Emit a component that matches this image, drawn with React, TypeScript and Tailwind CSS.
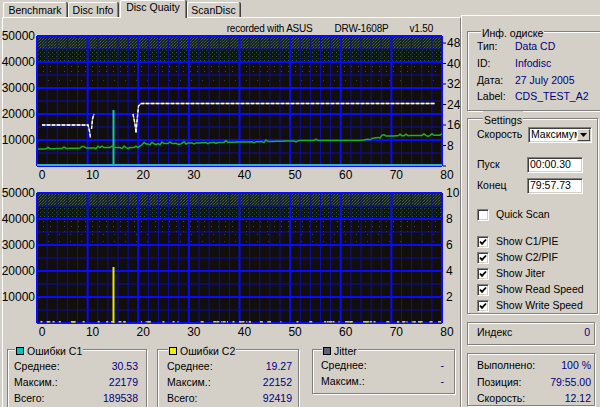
import React, { ReactNode } from "react";

const X0 = 37;
const X1 = 442;
const xs = (v: number) => X0 + (v * (X1 - X0)) / 80;
const rnd = (i: number) => {
  const s = Math.sin(i * 12.9898) * 43758.5453;
  return s - Math.floor(s);
};

const greenPts = (() => {
  const pts: string[] = [];
  for (let x = 38; x <= 442; x += 2) {
    let y;
    if (x < 100) y = 149 - (x - 37) * 0.02;
    else if (x < 138) y = 147.6;
    else if (x < 143) y = 147.6 - (x - 138) * 0.7;
    else if (x < 300) y = 144 - (x - 143) * 0.02;
    else if (x < 360) y = 140.6;
    else if (x < 385) y = 140.6 - (x - 360) * 0.18;
    else y = 136 - (x - 385) * 0.015;
    const n = rnd(x);
    y += n < 0.15 ? -1.5 : n > 0.9 ? 1 : 0;
    pts.push(`${x},${y.toFixed(1)}`);
  }
  return pts.join(" ");
})();

const whitePath =
  "M42,125 H88 L89.5,131 L90.5,138 M91.5,129 L92.5,119 L94,114 M133,114 L135,124 L136,133 L137,121 L138.5,106 L141,103.5 H435";

const yellowBits = Array.from({ length: 70 }, (_, i) => ({
  x: 40 + rnd(i + 100) * 400,
  w: 1 + Math.round(rnd(i + 300) * 2),
}));

const Chart = ({ top, kind }: { top: number; kind: "top" | "bottom" }) => {
  const id = kind;
  const y0 = top;
  const y1 = top + 130;
  const vLines = Array.from({ length: 41 }, (_, i) => i);
  const hLines = Array.from({ length: 11 }, (_, j) => j);

  return (
    <svg width={457} height={kind === "top" ? 146 : 147} className={`block overflow-visible ${kind === "bottom" ? "mt-[11px]" : ""}`}>
      <defs>
        <pattern id={`${id}-p1`} width="3" height="3" patternUnits="userSpaceOnUse">
          <rect width="3" height="3" fill="#17231b" />
          <rect x="0" y="0" width="1" height="1" fill="#3b5e4a" />
          <rect x="2" y="1" width="1" height="1" fill="#2d4a3a" />
          <rect x="1" y="2" width="1" height="1" fill="#406650" />
        </pattern>
        <pattern id={`${id}-p2`} width="4" height="4" patternUnits="userSpaceOnUse">
          <rect width="4" height="4" fill="#14140f" />
          <rect x="0" y="0" width="1" height="1" fill="#355c44" />
          <rect x="2" y="2" width="1" height="1" fill="#26422f" />
        </pattern>
        <pattern id={`${id}-p3`} width="7" height="5" patternUnits="userSpaceOnUse">
          <rect width="7" height="5" fill="#120e0a" />
          <rect x="1" y="1" width="1" height="1" fill="#325640" />
        </pattern>
        <pattern id={`${id}-p4`} width="11" height="7" patternUnits="userSpaceOnUse">
          <rect width="11" height="7" fill="#120e0a" />
          <rect x="4" y="3" width="1" height="1" fill="#2a4835" />
        </pattern>
      </defs>
      <g transform={`translate(-3,${-top})`} fontFamily='"Liberation Sans", Arial, sans-serif' fontSize="12">
        <rect x={X0} y={y0} width={X1 - X0} height={130} fill="#120e0a" />
        <rect x={X0} y={y0} width={X1 - X0} height={13} fill={`url(#${id}-p1)`} />
        <rect x={X0} y={y0 + 13} width={X1 - X0} height={13} fill={`url(#${id}-p2)`} />
        <rect x={X0} y={y0 + 26} width={X1 - X0} height={13} fill={`url(#${id}-p3)`} />
        <rect x={X0} y={y0 + 39} width={X1 - X0} height={13} fill={`url(#${id}-p4)`} />

        {vLines.map((i) => {
          const x = xs(i * 2);
          const thick = i % 5 === 0;
          return (
            <line
              key={`v${i}`}
              x1={x}
              x2={x}
              y1={y0}
              y2={y1}
              stroke={thick ? "#0a0aff" : "#0c0cb0"}
              strokeWidth={thick ? 2 : 1}
            />
          );
        })}
        {hLines.map((j) => {
          const y = y0 + j * 13;
          const thick = j % 2 === 0;
          return (
            <line
              key={`h${j}`}
              x1={X0}
              x2={X1}
              y1={y}
              y2={y}
              stroke={thick ? "#0a0aff" : "#0c0cb0"}
              strokeWidth={thick ? 2 : 1}
            />
          );
        })}

        {kind === "top" ? (
          <>
            <rect x={X0} y={y1 - 2} width={X1 - X0} height={2} fill="#33b5b5" />
            <rect x={112.5} y={110} width={2} height={y1 - 110} fill="#10c4c4" />
            <polyline points={greenPts} fill="none" stroke="#1fb01f" strokeWidth={1.5} />
            <path d={whitePath} fill="none" stroke="#a8a8a8" strokeWidth={1.3} />
            <path d={whitePath} fill="none" stroke="#ffffff" strokeWidth={1.3} strokeDasharray="3 2" />
          </>
        ) : (
          <>
            {yellowBits.map((b, i) => (
              <rect key={i} x={b.x} y={y1 - 2} width={b.w} height={1.5} fill="#d8d800" />
            ))}
            <rect x={112.5} y={267} width={2} height={y1 - 267} fill="#e8e800" />
          </>
        )}

        {[50000, 40000, 30000, 20000, 10000].map((v, j) => (
          <text key={v} x={35} y={y0 + j * 26} textAnchor="end" dominantBaseline="central" fill="#000">
            {v}
          </text>
        ))}
        {[0, 10, 20, 30, 40, 50, 60, 70, 80].map((v) => (
          <text key={v} x={xs(v) + 5} y={y0 + 139} textAnchor="middle" dominantBaseline="central" fill="#000">
            {v}
          </text>
        ))}
        {kind === "top"
          ? [48, 40, 32, 24, 16, 8, 0].map((v) => {
              const y = y1 - v * 2.5625;
              return (
                <g key={v}>
                  <line x1={443} x2={446} y1={y} y2={y} stroke="#000" strokeWidth={1} />
                  {v > 0 && (
                    <text x={447} y={y} dominantBaseline="central" fill="#000">
                      {v}
                    </text>
                  )}
                </g>
              );
            })
          : [10, 8, 6, 4, 2].map((v) => (
              <text key={v} x={446} y={y1 - v * 13} dominantBaseline="central" fill="#000">
                {v}
              </text>
            ))}
      </g>
    </svg>
  );
};

const GroupBox = ({
  title,
  className,
  legendClass,
  children,
}: {
  title?: ReactNode;
  className?: string;
  legendClass?: string;
  children: ReactNode;
}) => (
  <fieldset className={`border border-[#808080] shadow-[inset_1px_1px_0_#fff,1px_1px_0_#fff] ${className || ""}`}>
    {title && (
      <legend className={`bg-[#d4d0c8] px-[1px] pt-[4px] leading-[10px] ${legendClass || ""}`}>{title}</legend>
    )}
    {children}
  </fieldset>
);

const Swatch = ({ color }: { color: string }) => (
  <span className={`inline-block h-[8px] w-[8px] border border-black ${color}`} />
);

const StatRow = ({ label, value }: { label: string; value: string }) => (
  <div className="flex justify-between leading-[16px]">
    <span>{label}</span>
    <span className="text-[#000080]">{value}</span>
  </div>
);

const sunken =
  "border border-t-[#808080] border-l-[#808080] border-r-white border-b-white shadow-[inset_1px_1px_0_#404040,inset_-1px_-1px_0_#d4d0c8]";

const CheckBox = ({ checked, label }: { checked: boolean; label: string }) => (
  <div className="flex h-[16px] items-center gap-[7px]">
    <span className={`flex h-[12px] w-[12px] items-center justify-center bg-white ${sunken}`}>
      {checked && (
        <svg width="8" height="8" viewBox="0 0 8 8">
          <polyline points="1,3.5 3,5.8 7,1.5" fill="none" stroke="#000" strokeWidth="1.8" />
        </svg>
      )}
    </span>
    <span>{label}</span>
  </div>
);

const Tab = ({ text, active, className }: { text: string; active?: boolean; className: string }) => (
  <div
    className={`flex items-center justify-center rounded-t-[2px] border-l border-t border-r border-l-white border-t-white border-r-[#808080] shadow-[1px_0_0_#404040] bg-[#d4d0c8] ${
      active ? "relative z-10 h-[18px] -mb-[1px] pb-[3px]" : "h-[15px] pt-[1px]"
    } ${className}`}
  >
    {text}
  </div>
);

export default function App() {
  return (
    <div className="flex h-[407px] w-[600px] overflow-hidden bg-[#d4d0c8] font-['Liberation_Sans',Arial,sans-serif] text-[10.5px] text-black">
      <div className="flex w-[461px] flex-col pl-[2px]">
        <div className="flex h-[17px] items-end pl-[1px]">
          <Tab text="Benchmark" className="w-[64px]" />
          <Tab text="Disc Info" className="ml-[1px] w-[50px]" />
          <Tab text="Disc Quaity" active className="ml-[2px] w-[66px]" />
          <Tab text="ScanDisc" className="ml-[1px] w-[53px]" />
        </div>
        <div className="flex flex-1 flex-col border-l border-r border-t border-l-white border-r-[#808080] border-t-white">
          <div className="flex h-[18px] justify-end pr-[27px] pt-[4px] text-[10px] leading-[14px] tracking-[-0.2px]">
            <span>recorded with ASUS</span>
            <span className="ml-[22px]">DRW-1608P</span>
            <span className="ml-[21px]">v1.50</span>
          </div>
          <Chart top={36} kind="top" />
          <Chart top={193} kind="bottom" />
          <div className="flex items-start pt-[2px]">
            <GroupBox
              className="ml-[4px] h-[80px] w-[140px] px-[6px] pr-[8px]"
              legendClass="ml-[1px]"
              title={
                <span className="inline-flex items-center gap-[3px]">
                  <Swatch color="bg-[#00c0c0]" />
                  Ошибки C1
                </span>
              }
            >
              <div className="pt-[2px]">
                <StatRow label="Среднее:" value="30.53" />
                <StatRow label="Максим.:" value="22179" />
                <StatRow label="Всего:" value="189538" />
              </div>
            </GroupBox>
            <GroupBox
              className="ml-[10px] h-[80px] w-[142px] pl-[9px] pr-[6px]"
              legendClass="ml-[1px]"
              title={
                <span className="inline-flex items-center gap-[3px]">
                  <Swatch color="bg-[#f0f000]" />
                  Ошибки C2
                </span>
              }
            >
              <div className="pt-[2px]">
                <StatRow label="Среднее:" value="19.27" />
                <StatRow label="Максим.:" value="22152" />
                <StatRow label="Всего:" value="92419" />
              </div>
            </GroupBox>
            <GroupBox
              className="ml-[13px] h-[52px] w-[143px] pl-[8px] pr-[10px]"
              legendClass="ml-[1px]"
              title={
                <span className="inline-flex items-center gap-[3px]">
                  <Swatch color="bg-[#606078]" />
                  Jitter
                </span>
              }
            >
              <div className="pt-[1px]">
                <StatRow label="Среднее:" value="-" />
                <StatRow label="Максим.:" value="-" />
              </div>
            </GroupBox>
          </div>
        </div>
      </div>

      <div className="mt-[15px] flex flex-1 flex-col border-l border-t border-white pl-[5px] pr-[2px]">
        <GroupBox className="-mr-[6px] mt-[8px] h-[87px] pl-[9px]" legendClass="ml-[4px]" title="Инф. одиске">
          <div className="leading-[16.8px]">
            {[
              ["Тип:", "Data CD"],
              ["ID:", "Infodisc"],
              ["Дата:", "27 July 2005"],
              ["Label:", "CDS_TEST_A2"],
            ].map(([l, v]) => (
              <div key={l} className="flex">
                <span className="w-[38px]">{l}</span>
                <span className="text-[#000080]">{v}</span>
              </div>
            ))}
          </div>
        </GroupBox>

        <GroupBox className="h-[203px] pl-[9px]" legendClass="ml-[6px]" title="Settings">
          <div className="mt-[2px] flex h-[16px] items-center">
            <span className="w-[51px]">Скорость</span>
            <div className={`flex h-[16px] w-[64px] items-center bg-white pl-[2px] ${sunken}`}>
              <span className="w-[46px] overflow-hidden whitespace-nowrap">Максимум</span>
              <span className="ml-auto mr-[1px] flex h-[12px] w-[13px] items-center justify-center border border-b-[#404040] border-l-white border-r-[#404040] border-t-white bg-[#d4d0c8]">
                <svg width="7" height="4" viewBox="0 0 7 4">
                  <polygon points="0,0 7,0 3.5,4" fill="#000" />
                </svg>
              </span>
            </div>
          </div>
          <div className="mt-[14px] flex h-[16px] items-center">
            <span className="w-[50px]">Пуск</span>
            <div className={`flex h-[16px] w-[56px] items-center bg-white pl-[2px] ${sunken}`}>00:00.30</div>
          </div>
          <div className="mt-[5px] flex h-[16px] items-center">
            <span className="w-[50px]">Конец</span>
            <div className={`flex h-[16px] w-[56px] items-center bg-white pl-[2px] ${sunken}`}>79:57.73</div>
          </div>
          <div className="mt-[13px]">
            <CheckBox checked={false} label="Quick Scan" />
          </div>
          <div className="mt-[11px]">
            <CheckBox checked label="Show C1/PIE" />
            <CheckBox checked label="Show C2/PIF" />
            <CheckBox checked label="Show Jiter" />
            <CheckBox checked label="Show Read Speed" />
            <CheckBox checked label="Show Write Speed" />
          </div>
        </GroupBox>

        <GroupBox className="mr-[3px] mt-[8px] flex h-[23px] items-center justify-between pl-[9px] pr-[4px] pt-[2px]">
          <span>Индекс</span>
          <span className="text-[#000080]">0</span>
        </GroupBox>

        <GroupBox className="mr-[3px] mt-[8px] h-[53px] pl-[9px] pr-[3px] pt-[3px]">
          <div className="leading-[16.5px]">
            <div className="flex justify-between">
              <span>Выполнено:</span>
              <span className="text-[#000080]">100 %</span>
            </div>
            <div className="flex justify-between">
              <span>Позиция:</span>
              <span className="text-[#000080]">79:55.00</span>
            </div>
            <div className="flex justify-between">
              <span>Скорость:</span>
              <span className="text-[#000080]">12.12</span>
            </div>
          </div>
        </GroupBox>
      </div>
    </div>
  );
}
